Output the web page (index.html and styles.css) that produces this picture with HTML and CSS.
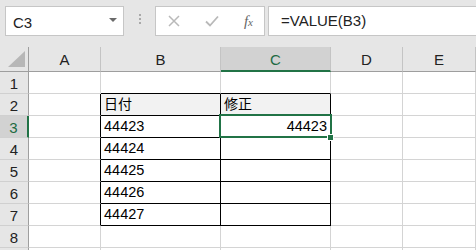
FILE: index.html
```html
<!doctype html>
<html>
<head>
<meta charset="utf-8">
<link rel="stylesheet" href="styles.css">
</head>
<body>

<div class="bar">
	<div class="namebox">
		<span>C3</span>
		<svg class="drop" width="8" height="5" viewBox="0 0 8 5"><path d="M0 0h8L4 4z" fill="#6a6a6a"/></svg>
	</div>
	<div class="dots"><i></i><i></i><i></i></div>
	<div class="btns">
		<svg width="12" height="12" viewBox="0 0 12 12"><path d="M1 1l10 10M11 1L1 11" stroke="#b9b9b9" stroke-width="1.5"/></svg>
		<svg width="14" height="12" viewBox="0 0 14 12"><path d="M1 6.5l4 4L13 1.5" stroke="#b9b9b9" stroke-width="1.8" fill="none"/></svg>
		<span class="fx">f<small>x</small></span>
	</div>
	<div class="formula">=VALUE(B3)</div>
</div>

<div class="sheet">
	<div class="corner"><svg width="17" height="16" viewBox="0 0 17 16"><path d="M17 0V16H0z" fill="#b7b7b7"/></svg></div>
	<div class="ch">A</div>
	<div class="ch">B</div>
	<div class="ch sel">C</div>
	<div class="ch">D</div>
	<div class="ch">E</div>
	<div class="ch"></div>

	<div class="rh">1</div>
	<div class="c"></div>
	<div class="c bb"></div>
	<div class="c bb"></div>
	<div class="c"></div>
	<div class="c"></div>
	<div class="c"></div>

	<div class="rh">2</div>
	<div class="c br"></div>
	<div class="c t head">日付</div>
	<div class="c t head">修正</div>
	<div class="c"></div>
	<div class="c"></div>
	<div class="c"></div>

	<div class="rh sel">3</div>
	<div class="c br"></div>
	<div class="c t">44423</div>
	<div class="c t num">44423<span class="cursor"></span><span class="handle"></span></div>
	<div class="c"></div>
	<div class="c"></div>
	<div class="c"></div>

	<div class="rh">4</div>
	<div class="c br"></div>
	<div class="c t">44424</div>
	<div class="c t"></div>
	<div class="c"></div>
	<div class="c"></div>
	<div class="c"></div>

	<div class="rh">5</div>
	<div class="c br"></div>
	<div class="c t">44425</div>
	<div class="c t"></div>
	<div class="c"></div>
	<div class="c"></div>
	<div class="c"></div>

	<div class="rh">6</div>
	<div class="c br"></div>
	<div class="c t">44426</div>
	<div class="c t"></div>
	<div class="c"></div>
	<div class="c"></div>
	<div class="c"></div>

	<div class="rh">7</div>
	<div class="c br"></div>
	<div class="c t">44427</div>
	<div class="c t"></div>
	<div class="c"></div>
	<div class="c"></div>
	<div class="c"></div>

	<div class="rh">8</div>
	<div class="c"></div>
	<div class="c"></div>
	<div class="c"></div>
	<div class="c"></div>
	<div class="c"></div>
	<div class="c"></div>

	<div class="rh"></div>
	<div class="c"></div>
	<div class="c"></div>
	<div class="c"></div>
	<div class="c"></div>
	<div class="c"></div>
	<div class="c"></div>
</div>

</body>
</html>
```

FILE: styles.css
```css
html, body {
	margin: 0;
	padding: 0;
	overflow: hidden;
}
body {
	width: 476px;
	height: 250px;
	background: #fff;
	font-family: "Liberation Sans", "Noto Sans CJK JP", sans-serif;
	color: #000;
}

/* formula bar */
.bar {
	display: flex;
	align-items: flex-start;
	height: 47px;
	box-sizing: border-box;
	padding: 6px 0 0 5px;
	background: #e6e6e6;
}
.namebox {
	display: flex;
	align-items: center;
	justify-content: space-between;
	width: 119px;
	height: 30px;
	box-sizing: border-box;
	padding: 0 6px 0 7px;
	background: #fff;
	border: 1px solid #c6c6c6;
	font-size: 15px;
	color: #222;
}
.namebox span {
	padding-top: 2px;
}
.drop {
	margin-bottom: 2px;
}
.dots {
	display: flex;
	flex-direction: column;
	align-items: center;
	gap: 2px;
	width: 31px;
	padding-top: 8px;
}
.dots i {
	display: block;
	width: 2px;
	height: 2px;
	background: #a9a9a9;
}
.btns {
	display: flex;
	align-items: center;
	justify-content: space-between;
	width: 110px;
	height: 30px;
	box-sizing: border-box;
	padding: 0 11px 0 12px;
	background: #fff;
	border: 1px solid #c6c6c6;
}
.fx {
	font-family: "Liberation Serif", serif;
	font-style: italic;
	font-size: 15px;
	color: #666;
	padding-top: 1px;
}
.fx small {
	font-size: 11px;
}
.formula {
	flex: 1;
	height: 30px;
	box-sizing: border-box;
	margin-left: 3px;
	margin-right: -2px;
	padding: 5px 0 0 12px;
	background: #fff;
	border: 1px solid #c6c6c6;
	font-size: 15px;
	color: #222;
}

/* grid */
.sheet {
	display: grid;
	grid-template-columns: 29px 72px 120px 110px 72px 73px 20px;
	grid-template-rows: 25px repeat(9, 22px);
}
.sheet > div {
	box-sizing: border-box;
}
.corner {
	display: flex;
	align-items: flex-end;
	padding: 0 3px 4px 8px;
	background: #e6e6e6;
	border-right: 1px solid #9e9e9e;
	border-bottom: 1px solid #9e9e9e;
}
.ch {
	display: flex;
	align-items: center;
	justify-content: center;
	background: #e6e6e6;
	border-right: 1px solid #c4c4c4;
	border-bottom: 1px solid #9e9e9e;
	font-size: 15px;
	color: #222;
	padding-top: 1px;
}
.ch.sel {
	background: #d2d2d2;
	color: #1e6b43;
	border-bottom: 2px solid #217346;
}
.rh {
	display: flex;
	align-items: center;
	justify-content: center;
	background: #e6e6e6;
	border-right: 1px solid #9e9e9e;
	border-bottom: 1px solid #d0d0d0;
	font-size: 15px;
	color: #222;
	padding-top: 1px;
}
.rh.sel {
	background: #d2d2d2;
	color: #1e6b43;
	border-right: 2px solid #217346;
}
.c {
	border-right: 1px solid #d4d4d4;
	border-bottom: 1px solid #d4d4d4;
	font-size: 14.5px;
	line-height: 21px;
}
.c.t {
	border-right-color: #000;
	border-bottom-color: #000;
	padding-left: 3px;
}
.c.bb {
	border-bottom-color: #000;
}
.c.br {
	border-right-color: #000;
}
.c.head {
	background: #f2f2f2;
	font-size: 14px;
}
.c.num {
	position: relative;
	text-align: right;
	padding-right: 3px;
}
.cursor {
	position: absolute;
	left: -2px;
	top: -2px;
	width: 113px;
	height: 24px;
	box-sizing: border-box;
	border: 2px solid #217346;
}
.handle {
	position: absolute;
	left: 106px;
	top: 18px;
	width: 7px;
	height: 7px;
	box-sizing: border-box;
	background: #217346;
	border: 1px solid #fff;
}
```
